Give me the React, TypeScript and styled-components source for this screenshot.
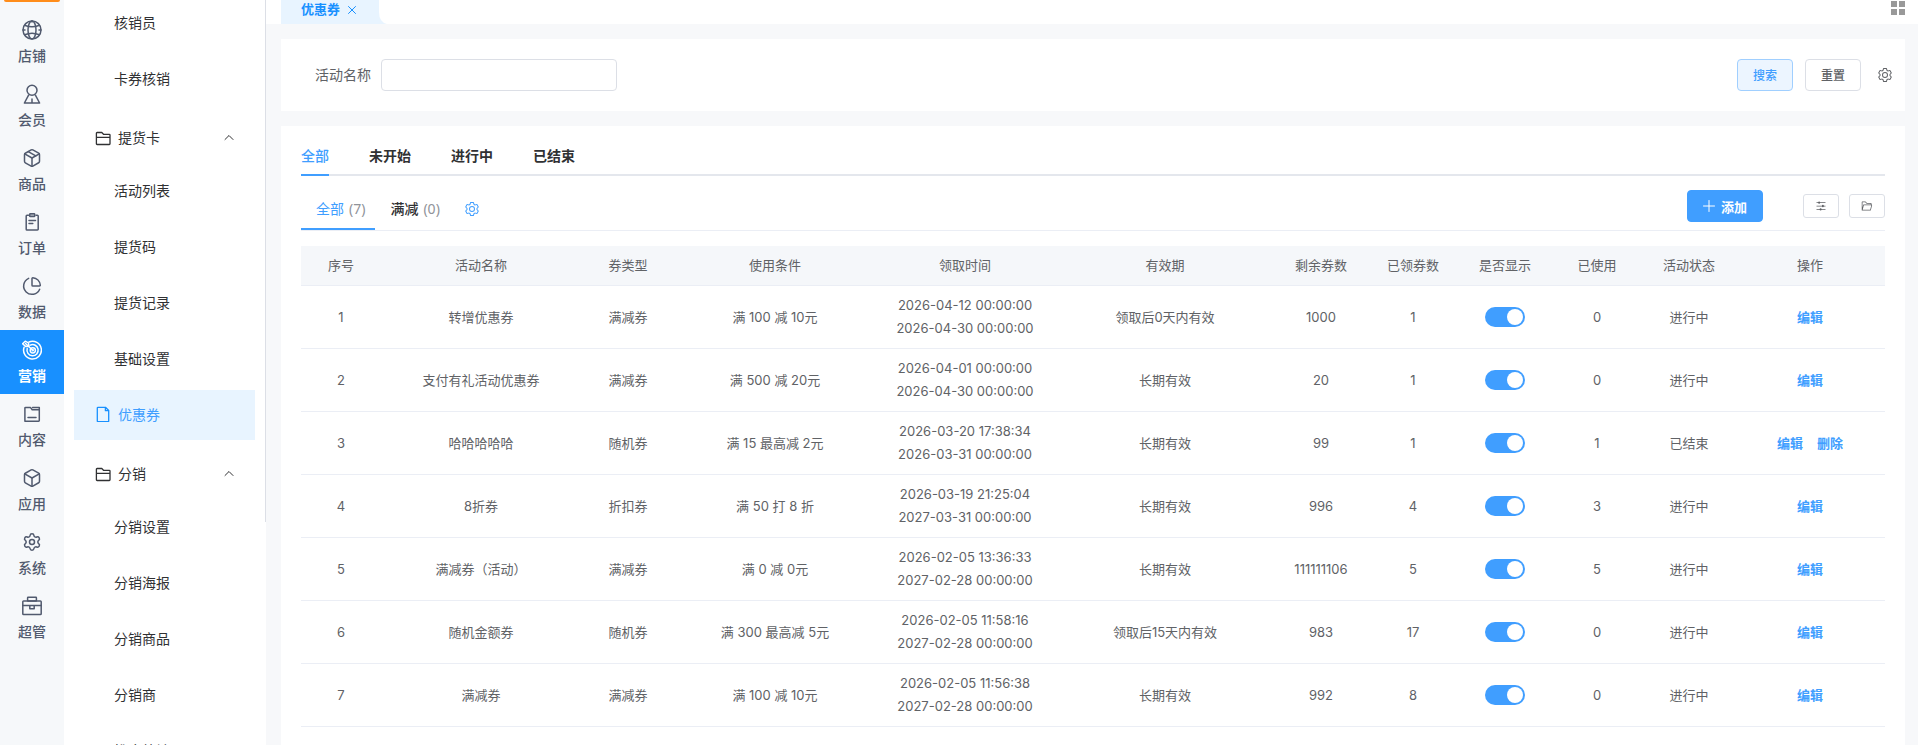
import React from 'react';
import styled, { createGlobalStyle, css } from 'styled-components';
import { Box, ChartPie, Package, Settings } from 'lucide-react';

const sans = `"Noto Sans", "Noto Sans CJK SC", sans-serif`;
const tableFont = `Inter, "Noto Sans CJK SC", sans-serif`;

const GlobalStyle = createGlobalStyle`
  * { box-sizing: border-box; }
  body { margin: 0; font-family: ${sans}; font-size: 14px; color: #303133; background: #f7f8fa; }
  button, input { font-family: inherit; }
  a { color: inherit; text-decoration: none; }
  svg { display: block; flex: none; }
`;

const Page = styled.div`
  display: flex;
  height: 100vh;
  overflow: hidden;
`;

/* ---------- primary rail ---------- */

const Rail = styled.nav`
  flex: none;
  width: 64px;
  background: #f6f8fa;
`;

const Brand = styled.div`
  height: 2px;
  margin: 0 4px 8px;
  border-radius: 0 0 6px 6px;
  background: #ff8d1a;
`;

const RailLink = styled.a<{ $active?: boolean }>`
  display: flex;
  flex-direction: column;
  align-items: center;
  height: 64px;
  padding-top: 10px;
  gap: 6px;
  line-height: 20px;
  font-weight: 500;
  color: #515a6e;
  ${p => p.$active && css`
    background: #1890ff;
    color: #fff;
    font-weight: 700;
  `}
`;

/* ---------- secondary menu ---------- */

const SubNav = styled.nav`
  flex: none;
  display: flex;
  align-items: flex-start;
  width: 202px;
  background: #fff;
`;

const SubList = styled.div`
  flex: 1;
  display: flex;
  flex-direction: column;
  margin-top: -5px;
  padding: 0 10px;
`;

const Divider = styled.div`
  width: 1px;
  height: 70vh;
  background: #dcdfe6;
`;

const SubLink = styled.a<{ $active?: boolean }>`
  flex: none;
  display: flex;
  align-items: center;
  gap: 7px;
  height: 50px;
  margin: 3px 0;
  padding: 0 0 2px ${p => (p.$active ? 21 : 40)}px;
  ${p => p.$active && css`
    background: #e8f4ff;
    color: #409eff;
  `}
`;

const GroupButton = styled.button`
  flex: none;
  display: flex;
  align-items: center;
  gap: 7px;
  width: 100%;
  height: 50px;
  margin: 6px 0 0;
  padding: 0 21px 0 21px;
  border: 0;
  background: none;
  font-size: 14px;
  color: #303133;
  span { flex: 1; padding-bottom: 2px; text-align: left; }
`;

/* ---------- main column ---------- */

const Main = styled.main`
  flex: 1;
  min-width: 0;
`;

const TopBar = styled.header`
  display: flex;
  align-items: flex-start;
  justify-content: space-between;
  height: 24px;
  padding: 0 13px 0 15px;
  background: #fff;
`;

const PageTab = styled.div`
  display: flex;
  height: 24px;
`;

const PageTabBody = styled.div`
  display: flex;
  align-items: center;
  gap: 8px;
  width: 98px;
  height: 24px;
  padding: 0 0 6px 20px;
  background: #e8f4ff;
  color: #1890ff;
  font-size: 13px;
  font-weight: 700;
  line-height: 18px;
`;

const PlainButton = styled.button`
  display: flex;
  padding: 0;
  border: 0;
  background: none;
  color: inherit;
`;

const CloseButton = styled(PlainButton)`
  padding-top: 2px;
`;

const GridButton = styled(PlainButton)`
  padding-top: 1px;
  color: #999;
`;

const Card = styled.section`
  margin: 15px 13px 0 15px;
  background: #fff;
`;

const SearchCard = styled(Card)`
  display: flex;
  align-items: center;
  height: 72px;
  padding: 0 12px 0 34px;
`;

const SearchLabel = styled.label`
  margin-right: 10px;
  padding-bottom: 2px;
  color: #606266;
`;

const SearchInput = styled.input`
  width: 236px;
  height: 32px;
  margin-right: auto;
  padding: 0 12px;
  border: 1px solid #dcdfe6;
  border-radius: 4px;
  font-size: 14px;
  outline: none;
`;

const Button = styled.button<{ $tone?: 'soft' | 'primary' }>`
  display: flex;
  align-items: center;
  justify-content: center;
  gap: 6px;
  width: 56px;
  height: 32px;
  margin-right: 12px;
  padding: 0;
  border: 1px solid #dcdfe6;
  border-radius: 4px;
  background: #fff;
  color: #606266;
  font-size: 12px;
  font-weight: 500;
  ${p => p.$tone === 'soft' && css`
    border-color: #a0cfff;
    background: #ecf5ff;
    color: #409eff;
  `}
  ${p => p.$tone === 'primary' && css`
    width: 76px;
    margin-right: 30px;
    border-color: #409eff;
    background: #409eff;
    color: #fff;
    font-size: 13px;
    font-weight: 700;
  `}
`;

const SettingButton = styled(PlainButton)`
  margin-left: 4px;
  color: #606266;
`;

const ToolButton = styled(Button)`
  width: 36px;
  height: 24px;
  margin: 0;
  border-radius: 3px;
`;

const ListCard = styled(Card)`
  padding: 12px 20px 40px;
`;

const StatusTabs = styled.div`
  display: flex;
  gap: 40px;
  height: 38px;
  box-shadow: inset 0 -2px 0 #e4e7ed;
`;

const StatusTab = styled.button<{ $active?: boolean }>`
  padding: 0 0 2px;
  border: 0;
  border-bottom: 2px solid ${p => (p.$active ? '#409eff' : 'transparent')};
  background: none;
  color: ${p => (p.$active ? '#409eff' : '#303133')};
  font-size: 14px;
  font-weight: ${p => (p.$active ? 500 : 700)};
`;

const ToolRow = styled.div`
  display: flex;
  align-items: center;
  height: 55px;
  padding-top: 6px;
  border-bottom: 1px solid #ebeef5;
`;

const TypeTabs = styled.div`
  flex: 1;
  display: flex;
  align-items: stretch;
  align-self: stretch;
  padding-top: 8px;
`;

const TypeTab = styled.button<{ $active?: boolean }>`
  display: flex;
  align-items: center;
  gap: 5px;
  padding: 0 10px 2px 15px;
  border: 0;
  border-bottom: 2px solid ${p => (p.$active ? '#409eff' : 'transparent')};
  background: none;
  color: ${p => (p.$active ? '#409eff' : '#303133')};
  font-size: 14px;
  font-weight: ${p => (p.$active ? 400 : 500)};
`;

const Count = styled.span`
  color: #909399;
  font-weight: 400;
`;

const TypeSetting = styled(PlainButton)`
  align-items: center;
  margin: 0 0 2px 14px;
  color: #409eff;
`;

const Tools = styled.div`
  display: flex;
  align-items: center;
  gap: 10px;
`;

/* ---------- table ---------- */

const Table = styled.table`
  width: 100%;
  margin-top: 15px;
  border-collapse: separate;
  border-spacing: 0;
  table-layout: fixed;
  font-family: ${tableFont};
  font-size: 13px;
  line-height: 23px;
  color: #606266;
  text-align: center;
  th, td { padding: 8px 0; border-bottom: 1px solid #ebeef5; font-weight: 400; }
  th { background: #f5f7fa; }
  td { height: 63px; }
`;

const HeadCell = styled.th`
  height: 40px;
`;

const Switch = styled.input`
  display: block;
  appearance: none;
  width: 40px;
  height: 20px;
  margin: 0 auto;
  padding: 2px;
  border-radius: 10px;
  background: #dcdfe6;
  &::before {
    content: '';
    display: block;
    width: 16px;
    height: 16px;
    border-radius: 50%;
    background: #fff;
  }
  &:checked { background: #409eff; }
  &:checked::before { margin-left: auto; }
`;

const Actions = styled.div`
  display: flex;
  justify-content: center;
  gap: 14px;
`;

const Action = styled.a`
  color: #409eff;
  font-weight: 600;
`;

/* ---------- icons ---------- */

const Line = ({ size = 20, width = 1.3, children }: { size?: number; width?: number; children: React.ReactNode }) => (
  <svg width={size} height={size} viewBox={`0 0 ${size} ${size}`} fill="none" stroke="currentColor"
    strokeWidth={width} strokeLinecap="round" strokeLinejoin="round" aria-hidden="true">{children}</svg>
);

const Solid = ({ size, d }: { size: number; d: string }) => (
  <svg width={size} height={size} viewBox="0 0 1024 1024" fill="currentColor" aria-hidden="true"><path d={d} /></svg>
);

const GEAR = 'M600.704 64a32 32 0 0 1 30.464 22.208l35.2 109.376c14.784 7.232 28.928 15.36 42.432 24.512l112.384-24.192a32 32 0 0 1 34.432 15.36L944.32 364.8a32 32 0 0 1-4.032 37.504l-77.12 85.12a357.12 357.12 0 0 1 0 49.024l77.12 85.248a32 32 0 0 1 4.032 37.504l-88.704 153.6a32 32 0 0 1-34.432 15.296L708.8 803.904c-13.44 9.088-27.648 17.28-42.368 24.512l-35.264 109.376A32 32 0 0 1 600.704 960H423.296a32 32 0 0 1-30.464-22.208L357.696 828.48a351.616 351.616 0 0 1-42.56-24.64l-112.32 24.256a32 32 0 0 1-34.432-15.36L79.68 659.2a32 32 0 0 1 4.032-37.504l77.12-85.248a357.12 357.12 0 0 1 0-48.896l-77.12-85.248A32 32 0 0 1 79.68 364.8l88.704-153.6a32 32 0 0 1 34.432-15.296l112.32 24.256c13.568-9.152 27.776-17.408 42.56-24.64l35.2-109.312A32 32 0 0 1 423.232 64H600.64zm-23.424 64H446.72l-36.352 113.088-24.512 11.968a294.113 294.113 0 0 0-34.816 20.096l-22.656 15.36-116.224-25.088-65.28 113.152 79.68 88.192-1.92 27.136a293.12 293.12 0 0 0 0 40.192l1.92 27.136-79.808 88.192 65.344 113.152 116.224-25.024 22.656 15.296a294.113 294.113 0 0 0 34.816 20.096l24.512 11.968L446.72 896h130.688l36.48-113.152 24.448-11.904a288.282 288.282 0 0 0 34.752-20.096l22.592-15.296 116.288 25.024 65.28-113.152-79.744-88.192 1.92-27.136a293.12 293.12 0 0 0 0-40.256l-1.92-27.136 79.808-88.128-65.344-113.152-116.288 24.96-22.592-15.232a287.616 287.616 0 0 0-34.752-20.096l-24.448-11.904L577.344 128zM512 320a192 192 0 1 1 0 384 192 192 0 0 1 0-384zm0 64a128 128 0 1 0 0 256 128 128 0 0 0 0-256z';
const SLIDERS = 'M389.44 768a96.064 96.064 0 0 1 181.12 0H896v64H570.56a96.064 96.064 0 0 1-181.12 0H128v-64h261.44zm192-288a96.064 96.064 0 0 1 181.12 0H896v64H762.56a96.064 96.064 0 0 1-181.12 0H128v-64h453.44zm-320-288a96.064 96.064 0 0 1 181.12 0H896v64H442.56a96.064 96.064 0 0 1-181.12 0H128v-64h133.44z';
const FOLDER_OPEN = 'M878.08 448H241.92l-96 384h636.16l96-384zM832 384v-64H485.76L357.504 192H128v448l57.92-231.744A32 32 0 0 1 216.96 384H832zm-24.96 512H96a32 32 0 0 1-32-32V160a32 32 0 0 1 32-32h287.872l128.384 128H864a32 32 0 0 1 32 32v96h23.04a32 32 0 0 1 31.04 39.744l-112 448A32 32 0 0 1 807.04 896z';

const GlobeIcon = () => (
  <Line width={1.5}>
    <circle cx="10" cy="10" r="9" />
    <ellipse cx="10" cy="10" rx="4" ry="9" />
    <path d="M2.6 5.2Q10 8.4 17.4 5.2M2.6 14.8Q10 11.6 17.4 14.8M1 10h2M17 10h2M10 1v1" />
  </Line>
);
const MemberIcon = () => (
  <Line width={1.5}><circle cx="10" cy="6.2" r="5" /><path d="M6.6 11.2 2.4 19h15.2L13.4 11.2M10 15v4" /></Line>
);
const OrderIcon = () => (
  <Line width={1.5}>
    <path d="M6.5 3.2H5a.8.8 0 0 0-.8.8v13.2c0 .4.4.8.8.8h10.4a.8.8 0 0 0 .8-.8V4a.8.8 0 0 0-.8-.8H14" />
    <rect x="7.7" y="1.8" width="5" height="2.8" rx=".6" fill="currentColor" fillOpacity=".4" />
    <path d="M7 8.4h6.500M7 11.6h3.8" />
  </Line>
);
const TargetIcon = () => (
  <Line width={1.5}>
    <path d="M7 2a8.900 8.900 0 1 1-4.900 5.200" />
    <path d="M8.300 5.100a5.600 5.600 0 1 1-3.100 3.500" />
    <circle cx="10.8" cy="10.3" r="2.6" />
    <circle cx="10.8" cy="10.3" r=".5" />
    <path d="M3.500 3.500 10.500 10M.6 3.700 3.200 1.200l3.200 1.600.6 3.400-3.400.2z" />
  </Line>
);
const ContentIcon = () => (
  <Line width={1.5}>
    <path d="M2.900 17.200V4.100c0-.4.3-.7.7-.7h4.800l1.800 2.300h7.100v10.800c0 .4-.3.7-.7.7zM10.600 3.600h6.700v4.200M6 13.600h8" />
  </Line>
);
const BriefcaseIcon = () => (
  <Line width={1.5}>
    <rect x="5.6" y="1.2" width="8.8" height="3.8" rx=".5" />
    <rect x=".8" y="5" width="18.4" height="13.5" rx=".8" />
    <path d="M.8 9.500h18.400M7.800 9.500v3.200h4.400V9.500" />
  </Line>
);
const FolderIcon = () => (
  <Line size={16} width={1.3}>
    <path d="M1.400 13.800V3.200c0-.4.3-.7.7-.7h4.700l1.700 1.800h5.800c.4 0 .7.3.7.7v8.800c0 .4-.3.7-.7.7H2.100a.7.7 0 0 1-.7-.7zM1.400 7.300H15" />
  </Line>
);
const DocIcon = () => (
  <Line size={16} width={1.3}>
    <path d="M2.300 14.900V2c0-.4.300-.7.7-.7h7.500l3.200 3.200v10.400c0 .4-.3.700-.7.700H3a.7.7 0 0 1-.7-.7zM10.400 1.500v3.200h3.200" stroke="#1890ff" />
  </Line>
);
const ChevronUp = () => <Line size={10} width={1}><path d="M1 6.500 5 2.500l4 4" /></Line>;
const CloseIcon = () => <Line size={8} width={1}><path d="M.5.5l7 7M7.500.5l-7 7" /></Line>;
const PlusIcon = () => <Line size={12} width={1}><path d="M6 .5v11M.5 6h11" /></Line>;
const GridIcon = () => (
  <svg width="14" height="14" viewBox="0 0 14 14" fill="currentColor" aria-hidden="true">
    <path d="M0 0h6v6H0zM8 0h6v6H8zM0 8h6v6H0zM8 8h6v6H8z" />
  </svg>
);
const TabCorner = () => (
  <svg width="8" height="24" viewBox="0 0 8 24" fill="#e8f4ff" aria-hidden="true"><path d="M0 12Q0 22 8 24H0z" /></svg>
);

/* ---------- data ---------- */

const railItems = [
  { label: '店铺', icon: <GlobeIcon /> },
  { label: '会员', icon: <MemberIcon /> },
  { label: '商品', icon: <Package size={20} strokeWidth={1.8} /> },
  { label: '订单', icon: <OrderIcon /> },
  { label: '数据', icon: <ChartPie size={20} strokeWidth={1.8} /> },
  { label: '营销', icon: <TargetIcon />, active: true },
  { label: '内容', icon: <ContentIcon /> },
  { label: '应用', icon: <Box size={20} strokeWidth={1.8} /> },
  { label: '系统', icon: <Settings size={20} strokeWidth={1.8} /> },
  { label: '超管', icon: <BriefcaseIcon /> },
];

type MenuEntry = { label: string; kind?: 'group' | 'active' };
const menu: MenuEntry[] = [
  { label: '核销员' }, { label: '卡券核销' },
  { label: '提货卡', kind: 'group' },
  { label: '活动列表' }, { label: '提货码' }, { label: '提货记录' }, { label: '基础设置' },
  { label: '优惠券', kind: 'active' },
  { label: '分销', kind: 'group' },
  { label: '分销设置' }, { label: '分销海报' }, { label: '分销商品' }, { label: '分销商' }, { label: '推广统计' },
];

const columns: [string, number][] = [
  ['序号', 80], ['活动名称', 200], ['券类型', 94], ['使用条件', 200], ['领取时间', 180], ['有效期', 220],
  ['剩余券数', 92], ['已领券数', 92], ['是否显示', 92], ['已使用', 92], ['活动状态', 92], ['操作', 150],
];

const Col = styled.col<{ $w: number }>`
  width: ${p => p.$w}px;
`;

const rows = [
  { name: '转增优惠券', type: '满减券', rule: '满 100 减 10元', from: '2026-04-12 00:00:00', to: '2026-04-30 00:00:00', valid: '领取后0天内有效', left: 1000, taken: 1, used: 0 },
  { name: '支付有礼活动优惠券', type: '满减券', rule: '满 500 减 20元', from: '2026-04-01 00:00:00', to: '2026-04-30 00:00:00', valid: '长期有效', left: 20, taken: 1, used: 0 },
  { name: '哈哈哈哈哈', type: '随机券', rule: '满 15 最高减 2元', from: '2026-03-20 17:38:34', to: '2026-03-31 00:00:00', valid: '长期有效', left: 99, taken: 1, used: 1, ended: true },
  { name: '8折券', type: '折扣券', rule: '满 50 打 8 折', from: '2026-03-19 21:25:04', to: '2027-03-31 00:00:00', valid: '长期有效', left: 996, taken: 4, used: 3 },
  { name: '满减券（活动）', type: '满减券', rule: '满 0 减 0元', from: '2026-02-05 13:36:33', to: '2027-02-28 00:00:00', valid: '长期有效', left: 111111106, taken: 5, used: 5 },
  { name: '随机金额券', type: '随机券', rule: '满 300 最高减 5元', from: '2026-02-05 11:58:16', to: '2027-02-28 00:00:00', valid: '领取后15天内有效', left: 983, taken: 17, used: 0 },
  { name: '满减券', type: '满减券', rule: '满 100 减 10元', from: '2026-02-05 11:56:38', to: '2027-02-28 00:00:00', valid: '长期有效', left: 992, taken: 8, used: 0 },
];

export default function App() {
  return (
    <Page>
      <GlobalStyle />
      <Rail aria-label="主导航">
        <Brand />
        {railItems.map(item => (
          <RailLink key={item.label} href="#" $active={item.active}>{item.icon}{item.label}</RailLink>
        ))}
      </Rail>
      <SubNav aria-label="营销">
        <SubList>
          {menu.map(item => item.kind === 'group' ? (
            <GroupButton key={item.label} type="button" aria-expanded="true">
              <FolderIcon /><span>{item.label}</span><ChevronUp />
            </GroupButton>
          ) : (
            <SubLink key={item.label} href="#" $active={item.kind === 'active'}>
              {item.kind === 'active' && <DocIcon />}{item.label}
            </SubLink>
          ))}
        </SubList>
        <Divider />
      </SubNav>
      <Main>
        <TopBar>
          <PageTab>
            <PageTabBody>优惠券<CloseButton type="button" aria-label="关闭"><CloseIcon /></CloseButton></PageTabBody>
            <TabCorner />
          </PageTab>
          <GridButton type="button" aria-label="全部标签"><GridIcon /></GridButton>
        </TopBar>
        <SearchCard>
          <SearchLabel htmlFor="name">活动名称</SearchLabel>
          <SearchInput id="name" type="text" />
          <Button type="button" $tone="soft">搜索</Button>
          <Button type="button">重置</Button>
          <SettingButton type="button" aria-label="搜索设置"><Solid size={16} d={GEAR} /></SettingButton>
        </SearchCard>
        <ListCard>
          <StatusTabs>
            <StatusTab type="button" $active>全部</StatusTab>
            <StatusTab type="button">未开始</StatusTab>
            <StatusTab type="button">进行中</StatusTab>
            <StatusTab type="button">已结束</StatusTab>
          </StatusTabs>
          <ToolRow>
            <TypeTabs>
              <TypeTab type="button" $active>全部<Count>(7)</Count></TypeTab>
              <TypeTab type="button">满减<Count>(0)</Count></TypeTab>
              <TypeSetting type="button" aria-label="分类设置"><Solid size={16} d={GEAR} /></TypeSetting>
            </TypeTabs>
            <Tools>
              <Button type="button" $tone="primary"><PlusIcon />添加</Button>
              <ToolButton type="button" aria-label="列设置"><Solid size={12} d={SLIDERS} /></ToolButton>
              <ToolButton type="button" aria-label="打开文件夹"><Solid size={12} d={FOLDER_OPEN} /></ToolButton>
            </Tools>
          </ToolRow>
          <Table>
            <colgroup>{columns.map(([label, w]) => <Col key={label} $w={w} />)}</colgroup>
            <thead>
              <tr>{columns.map(([label]) => <HeadCell key={label} scope="col">{label}</HeadCell>)}</tr>
            </thead>
            <tbody>
              {rows.map((row, i) => (
                <tr key={row.name}>
                  <td>{i + 1}</td>
                  <td>{row.name}</td>
                  <td>{row.type}</td>
                  <td>{row.rule}</td>
                  <td>{row.from}<br />{row.to}</td>
                  <td>{row.valid}</td>
                  <td>{row.left}</td>
                  <td>{row.taken}</td>
                  <td><Switch type="checkbox" role="switch" defaultChecked aria-label={`是否显示 ${row.name}`} /></td>
                  <td>{row.used}</td>
                  <td>{row.ended ? '已结束' : '进行中'}</td>
                  <td>
                    <Actions>
                      <Action href="#">编辑</Action>
                      {row.ended && <Action href="#">删除</Action>}
                    </Actions>
                  </td>
                </tr>
              ))}
            </tbody>
          </Table>
        </ListCard>
      </Main>
    </Page>
  );
}
